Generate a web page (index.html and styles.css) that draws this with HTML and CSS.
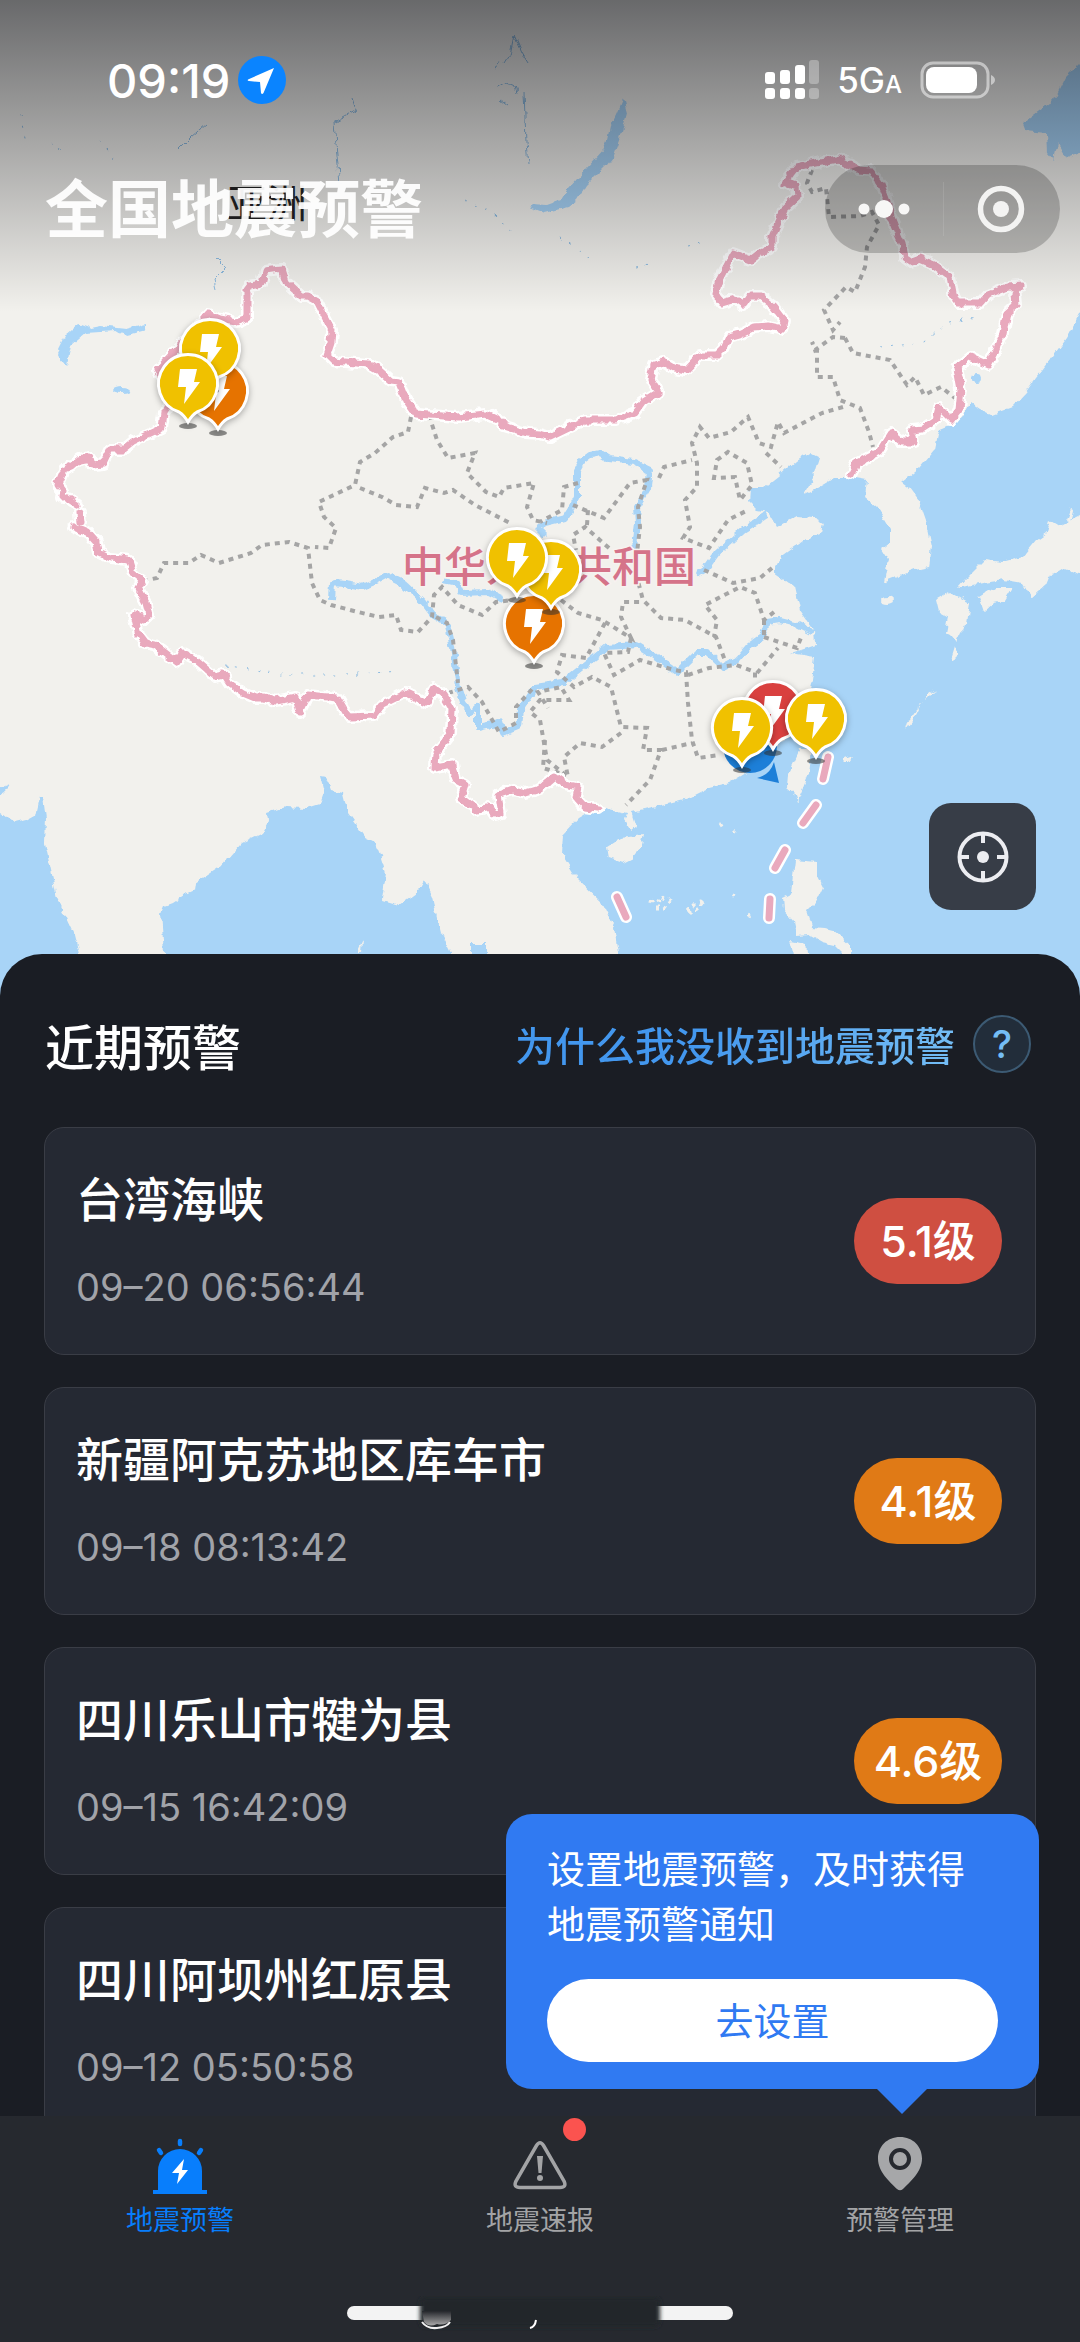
FILE: index.html
```
<!DOCTYPE html>
<html lang="zh-CN">
<head>
<meta charset="UTF-8">
<meta name="viewport" content="width=device-width, initial-scale=1.0">
<title>全国地震预警</title>
<link rel="stylesheet" href="styles.css">
</head>
<body>
<div class="app">
  <main class="content">
    <section class="map">
      <svg class="map-canvas" viewBox="0 0 1080 996" preserveAspectRatio="xMidYMin slice" aria-hidden="true">
        <defs>
          <g id="pin">
            <ellipse cx="0" cy="42" rx="9" ry="3" fill="#333" fill-opacity=".55"/>
            <path class="pin-body" d="M-9 28A29.500 29.500 0 1 1 9 28Q4 31 0 38Q-4 31 -9 28Z"/>
            <path d="M-8-15H9L6-2H12L-4 20L-2 3H-10Z" fill="#fff"/>
          </g>
          <!-- roughens coastlines and borders -->
          <filter id="rough" filterUnits="userSpaceOnUse" x="-20" y="-20" width="1120" height="1040" color-interpolation-filters="sRGB">
            <feTurbulence type="fractalNoise" baseFrequency="0.12" numOctaves="2" seed="4"/>
            <feDisplacementMap in="SourceGraphic" scale="7" xChannelSelector="R" yChannelSelector="G"/>
          </filter>
        </defs>

        <!-- seas and lakes -->
        <g class="water">
          <path d="M1100 300L1080 313 1067 337 1050 360 1036 377 1025 393 1012 407 991 415 979 409 970 403 962 417 950 425 938 430 934 450 919 468 902 482 910 488 919 500 926 520 932 547 929 567 915 570 902 575 884 582 888 560 881 549 890 542 890 528 877 507 865 497 867 480 850 477 836 477 819 487 803 495 812 480 819 457 809 452 797 460 778 477 764 488 750 488 749 503 757 511 769 513 777 527 784 523 795 517 815 518 824 523 822 532 803 541 781 557 774 572 795 587 800 610 814 630 815 645 791 653 815 657 812 680 809 693 800 715 782 742 760 765 729 783 708 788 688 798 661 805 631 812 636 827 631 831 624 820 626 813 605 808 590 811 578 818 562 835 561 853 578 880 602 903 614 927 618 953V1010H1100Z"/>
          <path d="M-20 806L0 812 15 823 27 820 36 815 40 797 43 797 46 820 45 843 57 897 74 933 79 953V1010H-20ZM-20 788H0L10 784 5 792 0 795H-20Z"/>
          <path d="M164 996V953L161 913 164 906 172 903 184 895 195 890 196 883 220 867 241 843 262 833 268 822 267 813 286 807 304 808 320 803 324 792 320 776 326 777 331 790 343 793 348 813 365 837 375 842 381 857 386 873 382 900 399 905 417 892 424 880 432 897 441 933 451 953V996Z"/>
          <path d="M472 943H486V996H472Z"/>
          <path d="M57 352L67 365 71 346 86 333 114 331 127 335 146 330 146 324 127 329 100 326 90 328 79 324 65 336Z"/>
          <path d="M623 98L627 113 622 132 613 157 607 165 585 187 577 200 568 207 544 213 529 207 533 204 547 205 561 200 567 190 579 177 603 150 607 140 610 127 617 112Z"/>
          <path d="M1100 50L1080 63 1065 78 1054 100 1023 123 1026 131 1046 133 1047 152 1054 160 1058 142 1067 158 1080 153H1100Z"/>
          <ellipse cx="122" cy="390" rx="9" ry="3"/>
          <ellipse cx="977" cy="378" rx="5" ry="4"/>
        </g>

        <!-- islands -->
        <g class="land">
          <path d="M621 838L643 835 640 848 633 858 623 863 609 858 607 847Z"/>
          <path d="M800 748L812 748 809 773 803 788 797 802 794 793 787 787 788 773Z"/>
          <path d="M795 860L817 862 817 875 823 887 817 900 807 910 812 927 825 928 833 930 850 945 850 960 835 945 822 942 808 934 797 935 794 922 784 910 783 897 791 893Z"/>
          <path d="M790 941L806 944 808 960H795Z"/>
          <path d="M936 600L950 592 970 603 967 623 961 632 956 642 951 636 945 633 948 617 939 612Z"/>
          <path d="M979 597L995 587 1013 587 1005 600 995 602 984 612Z"/>
          <path d="M957 588L967 577 984 560 1003 562 1022 557 1036 540 1046 533 1050 520 1060 526 1080 516H1100V575H1080L1062 568 1050 575 1046 585 1031 598 1022 583 1005 580 984 583Z"/>
          <ellipse cx="887" cy="600" rx="7" ry="3"/>
          <path d="M905 730l6-8 6-12 5-6-7 6-7 10zM926 700l10-10-8 5zM950 660l8-5-4-8zM842 762l7 0 4-6-8 3zM852 735l6-2zM867 753l3 3zM1068 520l4-11 2 1-3 12zM357 953l6-13-1 13z"/>
          <path d="M650 902l5-3 6 4 4-8M655 908l9 0 7-10M687 912l8-9 9-3-5 8-9 5zM720 823l3 5M733 830l3 3M748 915l2 1M732 895l3 1" fill="none" stroke="#f2f1ed" stroke-width="3" stroke-dasharray="4 4"/>
        </g>

        <!-- rivers -->
        <g class="river">
          <path d="M545 535L538 528 545 523 565 518 572 507 577 497 577 470 582 461 590 455 600 453 610 459 633 462 650 470 648 488 637 507 638 523 635 547"/>
          <path d="M697 573L707 567 717 553 743 530 767 515"/>
          <path d="M443 580L457 583 462 593 487 592 503 600"/>
          <path d="M332 600L333 583 345 584 363 587 372 583 387 575 403 583 423 602 433 615 447 623 453 647 458 687 463 702 470 713 478 705 478 728 500 723 503 733 518 727 520 710 535 687 562 683 576 672 600 653 607 647 637 645 653 655 677 672 697 652 707 652 723 667 737 660 749 646 762 637 767 622 780 620 796 624 812 632"/>
        </g>
        <path class="stream" d="M514 35l-4 20-5 8M514 35l8 18 6 10M493 68l8-6M524 92l2 50 2 22M352 98l4 12-22 12 3 34 3 28M206 125l-14 12-12 12M216 258l10 10-12 12 2 8"/>
        <path class="stream" d="M497 88l8-5 10 4 2 6M500 100l8 6"/>
        <path class="stream faint" d="M465 200l30 15 20 22M560 238l35 24M635 268l18-4M688 246l18 -4M20 115l6 28M50 142l16 14M100 140l14 18M880 348l44-6 22-18 34-8M225 665l60 10 60 0 55-4"/>

        <!-- province lines -->
        <g class="province">
          <path d="M411 417L408 432 393 437 375 453 360 462 355 485 319 502 324 517 336 528 329 548 315 547"/>
          <path d="M143 581L157 578 164 563 189 563 201 555 219 563 251 553 262 545 289 542 308 548 312 583 320 600 331 605 358 612 379 617 396 615 401 630 418 632 432 617 434 595 442 587 458 605 482 615 496 602 513 600"/>
          <path d="M429 415L437 440 448 458 475 453 467 473 486 492 499 497 504 488 534 483 527 507 533 520 547 523"/>
          <path d="M360 488L382 497 396 505 417 507 425 488 444 493 453 490 475 505 510 523"/>
          <path d="M812 170L807 183 812 192 826 188 829 217 860 216 872 212 879 225 867 247 865 267 855 292 846 287 824 310 833 330 840 322"/>
          <path d="M845 338L833 337 815 350 812 342 817 350 817 377 833 377 840 400 860 408 869 432 873 447"/>
          <path d="M845 338L853 353 890 360 907 385 915 377 924 395 941 387 955 398"/>
          <path d="M843 407L822 413 784 433 778 422 771 447 759 443 748 417 731 432 709 438 700 427 692 443 697 463 697 487 685 500 690 527 683 538 709 548 728 520 748 510"/>
          <path d="M659 478L664 467 692 460M766 453L781 467"/>
          <path d="M717 460L728 452 747 463 752 485 740 500 735 477 714 478Z"/>
          <path d="M578 483L564 487 562 510 540 522"/>
          <path d="M573 505L604 518 630 483 647 480 638 507 640 527 635 570 643 600 661 618 685 620 716 637 726 663"/>
          <path d="M609 548L585 527 573 535 576 550M587 525L588 510"/>
          <path d="M561 600L578 613 602 620 631 638 621 617 623 602 640 602"/>
          <path d="M605 623L586 658 562 655 557 672 574 687 592 677 611 687 621 727 647 728 643 750 661 750 650 780 626 805"/>
          <path d="M631 638L628 652 604 653 614 675 640 660 674 670 686 672 688 703 692 740 698 758 719 755"/>
          <path d="M662 750L692 743M688 675L709 668 736 665 755 672 755 682M757 673L778 648M764 637L797 648 802 635"/>
          <path d="M774 612L764 620 755 593 740 587 705 605 717 620 714 637M764 620V637"/>
          <path d="M704 570L733 583 760 578 772 568"/>
          <path d="M621 733L602 747 580 743 564 757 568 777 547 760 540 720 530 712 540 700 569 700 561 687 538 692 548 708"/>
          <path d="M448 693L468 687 482 702 499 732 516 723 516 707 534 687"/>
          <path d="M436 617L447 623 453 640 458 683M545 740L543 768 566 775"/>
        </g>

        <!-- national border -->
        <g class="border">
          <path id="border" d="M62 497L63 491 58 484 64 470 71 467 79 460 90 458 92 465 103 464 110 449 124 449 134 441 162 428 164 413 175 395 158 370 165 362 195 330 208 314 220 319 236 322 247 318 247 290 250 286 262 284 265 271 272 270 282 269 286 282 301 296 308 296 317 301 325 317 332 330 331 343 327 355 333 361 368 364 380 371 391 381 399 382 406 400 416 414 458 417 486 414 499 420 504 426 527 433 540 434 550 437 585 420 616 420 635 413 643 402 659 392 651 380 654 365 664 362 674 368 686 370 700 355 717 355 724 348 729 337 740 334 754 327 769 326 783 329 784 320 774 307 760 296 750 296 744 305 736 299 722 303 715 294 719 280 733 253 751 260 760 253 772 247 772 237 785 208 797 197 796 186 785 182 797 167 815 163 838 159 850 165 859 170 871 171 881 185 886 198 891 217 897 232 902 243 905 257 912 262 920 259 934 265 950 277 953 293 957 303 981 303 988 295 1008 287 1021 286 1015 293 1016 305 1007 313 1003 333 995 352 988 365 970 357 957 367 961 390 959 410 951 420 939 408 936 420 922 429 912 430 914 442 902 442 891 433 879 452 857 463 851 475M68 499L77 505M80 513L81 522M74 527L88 533 96 542 98 552 110 558 129 560 133 573 143 581 138 588 146 603 149 615 144 620 134 615 139 635 145 643 155 645 177 662 183 653 193 658 215 677 224 675 229 683 243 693 255 698 265 698 275 701 296 697 300 712 308 695 337 698 344 710 350 717 374 716 382 705 406 693 427 703 434 688 444 695 452 708 451 733 436 753 435 768 453 765 456 780 465 785 461 798 477 810 489 807 494 815 501 813 498 795 513 790 526 793 540 789 554 777 564 784 578 787 576 797 585 807 599 809"/>
        </g>
        <use class="border-line" href="#border"/>
        <g class="border sea-dashes">
          <path id="sea-dashes" d="M828 757L823 779M816 805L803 823M785 850L775 868M770 899L769 918M617 897L626 917"/>
        </g>
        <use class="border-line sea-dashes" href="#sea-dashes"/>

        <text class="map-label country" x="402" y="582">中华人民共和国</text>
        <text class="map-label" x="227" y="218">亚洲</text>

        <!-- current position -->
        <g class="position">
          <circle cx="750" cy="746" r="27"/>
          <path d="M757 778Q770 775 774 762L779 783Z"/>
        </g>

        <!-- quake pins -->
        <use class="level-mid" href="#pin" x="218" y="391"/>
        <use class="level-low" href="#pin" x="210" y="349"/>
        <use class="level-low" href="#pin" x="188" y="384"/>
        <use class="level-mid" href="#pin" x="534" y="624"/>
        <use class="level-low" href="#pin" x="551" y="570"/>
        <use class="level-low" href="#pin" x="517" y="558"/>
        <use class="level-high" href="#pin" x="773" y="711"/>
        <use class="level-low" href="#pin" x="742" y="728"/>
        <use class="level-low" href="#pin" x="816" y="719"/>
      </svg>

      <header class="topbar">
        <div class="status">
          <div class="status-left">
            <span class="time">09:19</span>
            <svg width="48" height="48" viewBox="0 0 48 48"><circle cx="24" cy="24" r="24" fill="#0a84ff"/><path d="M36 12L10 23.500Q9 25 11 25L22 26 23 37Q24 39 25.500 37Z" fill="#fff"/></svg>
          </div>
          <div class="status-right">
            <svg width="54" height="40" viewBox="0 0 54 40" fill="#fff">
              <rect x="0" y="12" width="10" height="12" rx="3"/><rect x="15" y="10" width="10" height="14" rx="3"/><rect x="30" y="5" width="10" height="19" rx="3"/><rect x="44" y="0" width="10" height="24" rx="3" opacity=".3"/>
              <rect x="0" y="28" width="10" height="11" rx="3"/><rect x="15" y="28" width="10" height="11" rx="3"/><rect x="30" y="28" width="10" height="11" rx="3"/><rect x="44" y="28" width="10" height="11" rx="3" opacity=".3"/>
            </svg>
            <span class="network">5G<small>A</small></span>
            <svg width="76" height="38" viewBox="0 0 76 38"><rect x="2" y="2" width="66" height="34" rx="11" fill="none" stroke="#fff" stroke-opacity=".5" stroke-width="3"/><rect x="6" y="6" width="51" height="26" rx="8" fill="#fff"/><path d="M71 14Q75 16 75 19T71 24Z" fill="#fff" opacity=".5"/></svg>
          </div>
        </div>
        <div class="nav">
          <h1>全国地震预警</h1>
          <div class="capsule">
            <button type="button" aria-label="更多"><svg width="52" height="20" viewBox="0 0 52 20" fill="#f7f7f6"><circle cx="6" cy="10" r="5.500"/><circle cx="26" cy="10" r="9"/><circle cx="46" cy="10" r="5.500"/></svg></button>
            <button type="button" aria-label="关闭"><svg width="48" height="48" viewBox="0 0 48 48"><circle cx="24" cy="24" r="20.500" fill="none" stroke="#f3f3f2" stroke-width="5.500"/><circle cx="24" cy="24" r="8" fill="#f3f3f2"/></svg></button>
          </div>
        </div>
      </header>

      <button class="locate" type="button" aria-label="定位">
        <svg width="52" height="52" viewBox="0 0 52 52" fill="none" stroke="#ecedf1" stroke-width="4"><circle cx="26" cy="26" r="23.500"/><path d="M26 3V12M26 40V49M3 26H12M40 26H49"/><circle cx="26" cy="26" r="6" fill="#ecedf1" stroke="none"/></svg>
      </button>
    </section>

    <section class="sheet">
      <div class="sheet-head">
        <h2>近期预警</h2>
        <a href="#help" class="help"><span class="help-text">为什么我没收到地震预警</span><span class="help-icon">?</span></a>
      </div>
      <ul class="quakes">
        <li class="quake">
          <div><h3>台湾海峡</h3><time>09–20 06:56:44</time></div>
          <span class="badge red">5.1级</span>
        </li>
        <li class="quake">
          <div><h3>新疆阿克苏地区库车市</h3><time>09–18 08:13:42</time></div>
          <span class="badge">4.1级</span>
        </li>
        <li class="quake">
          <div><h3>四川乐山市犍为县</h3><time>09–15 16:42:09</time></div>
          <span class="badge">4.6级</span>
        </li>
        <li class="quake">
          <div><h3>四川阿坝州红原县</h3><time>09–12 05:50:58</time></div>
        </li>
      </ul>
    </section>
  </main>

  <footer class="bottom">
    <div class="tip">
      <p>设置地震预警，及时获得地震预警通知</p>
      <button type="button">去设置</button>
    </div>
    <nav class="tabs">
      <a href="#warning" class="tab active">
        <svg width="56" height="60" viewBox="0 0 56 60" fill="#087efc">
          <path d="M6 54V35A22 22 0 0 1 50 35V54H55V58H1V54Z"/>
          <g stroke="#087efc" stroke-width="4.500" stroke-linecap="round"><path d="M28 5V8M7 14L9 17M49 14L47 17"/></g>
          <path d="M32 23L20 37H27L25 48 36 34H30Z" fill="#fff"/>
        </svg>
        <span>地震预警</span>
      </a>
      <a href="#report" class="tab">
        <span class="dot"></span>
        <svg width="56" height="60" viewBox="0 0 56 60" fill="none" stroke="#a3a4a6">
          <path d="M24.500 9.500Q28 4 31.500 9.500L52 45Q55 51.500 48 51.500H8Q1 51.500 4 45Z" stroke-width="3.500"/>
          <path d="M25 20H31L29.500 37H26.500Z" fill="#a3a4a6" stroke="none"/><circle cx="28" cy="42" r="3" fill="#a3a4a6" stroke="none"/>
        </svg>
        <span>地震速报</span>
      </a>
      <a href="#manage" class="tab">
        <svg width="56" height="60" viewBox="0 0 56 60">
          <path d="M28 1C15 1 6 10.500 6 22.500C6 36 18 46 25 53Q28 55.500 31 53C38 46 50 36 50 22.500C50 10.500 41 1 28 1Z" fill="#a6a7a9"/>
          <circle cx="28" cy="23" r="9" fill="#a6a7a9" stroke="#26292f" stroke-width="4"/>
        </svg>
        <span>预警管理</span>
      </a>
    </nav>
    <div class="home">
      <svg width="386" height="36" viewBox="0 0 386 36">
        <defs>
          <filter id="soft" x="-10%" y="-50%" width="120%" height="200%"><feGaussianBlur stdDeviation="2"/></filter>
          <linearGradient id="fade" x2="0" y2="1"><stop offset="0" stop-color="#24262b"/><stop offset="1" stop-color="#aaa"/></linearGradient>
        </defs>
        <rect x="0" y="10" width="386" height="14" rx="7" fill="#f3f3f3"/>
        <rect x="73" y="1" width="240" height="30" rx="6" fill="#24262b" filter="url(#soft)"/>
        <path d="M75 15H104V24Q98 30 90 28Q82 32 77 26Z" fill="url(#fade)"/>
        <path d="M75 26Q80 33 90 32Q100 31 103 26" fill="none" stroke="#f0f0f0" stroke-width="2"/>
        <path d="M189 24Q188 31 183 32" fill="none" stroke="#fff" stroke-width="2"/>
      </svg>
    </div>
  </footer>
</div>
</body>
</html>
```
FILE: styles.css
```
* {
  box-sizing: border-box;
}
body {
  margin: 0;
  font-family: Inter, "Noto Sans CJK SC", sans-serif;
  background-color: #1a1d24;
  color: #fff;
}
h1, h2, h3, p, ul {
  margin: 0;
  padding: 0;
}
a {
  text-decoration: none;
}
button {
  border: none;
  padding: 0;
  font-family: inherit;
  cursor: pointer;
}
svg {
  display: block;
}
.app {
  display: flex;
  flex-direction: column;
  height: 100vh;
}
.content {
  flex: 1;
  min-height: 0;
  overflow-y: auto;
  scrollbar-width: none;
}

/* Map */
.map {
  position: relative;
  aspect-ratio: 1080 / 996;
  background-color: #f2f1ed;
}
.map-canvas {
  width: 100%;
  height: 100%;
}
.water {
  fill: #a8d4f7;
  filter: url(#rough);
}
.land {
  fill: #f2f1ed;
  filter: url(#rough);
}
.river {
  fill: none;
  stroke: #a8d4f7;
  stroke-width: 6;
  stroke-linejoin: round;
  filter: url(#rough);
}
.stream {
  fill: none;
  stroke: #8dbbe0;
  stroke-width: 1;
  filter: url(#rough);
}
.faint {
  stroke-dasharray: 2 9;
}
.province {
  fill: none;
  stroke: #a5a5a5;
  stroke-width: 4;
  stroke-dasharray: 5 5;
}
.border {
  fill: none;
  stroke-linecap: round;
  stroke-linejoin: round;
  stroke: #fff;
  stroke-width: 12;
  filter: url(#rough);
}
.border-line {
  fill: none;
  stroke-linecap: round;
  stroke-linejoin: round;
  stroke: #e9a9bd;
  stroke-width: 7;
  filter: url(#rough);
}
.sea-dashes {
  filter: none;
}
.map-label {
  font-family: "Noto Sans CJK SC", sans-serif;
  font-size: 40px;
  fill: #222;
}
.country {
  font-size: 42px;
  font-weight: 500;
  fill: #d57389;
  stroke: #f7f2f0;
  stroke-width: 3;
  paint-order: stroke;
}
.position {
  fill: #1d7fd8;
}
.pin-body {
  stroke: #fff;
  stroke-width: 3;
  filter: drop-shadow(0 2px 3px rgba(0, 0, 0, 0.3));
}
.level-low {
  fill: #f0c100;
}
.level-mid {
  fill: #e67300;
}
.level-high {
  fill: #d9403f;
}

/* Status bar and title */
.topbar {
  position: absolute;
  top: 0;
  left: 0;
  right: 0;
  height: 312px;
  background: linear-gradient(rgba(0, 2, 8, 0.57), rgba(0, 0, 0, 0));
}
.status {
  display: flex;
  justify-content: space-between;
  align-items: center;
  height: 160px;
  padding: 0 84px 0 107px;
}
.status-left,
.status-right {
  display: flex;
  align-items: center;
}
.status-left {
  gap: 8px;
}
.status-right {
  gap: 18px;
}
.time {
  font-size: 47px;
  font-weight: 500;
}
.network {
  font-size: 35px;
  font-weight: 500;
}
.network small {
  font-size: 24px;
}
.nav {
  display: flex;
  justify-content: space-between;
  align-items: center;
  padding: 5px 20px 0 45px;
}
h1 {
  font-size: 63px;
  line-height: 88px;
  font-weight: 700;
  color: rgba(255, 255, 255, 0.94);
}
.capsule {
  display: flex;
  width: 235px;
  height: 88px;
  border-radius: 44px;
  background-color: rgba(0, 0, 0, 0.2);
}
.capsule button {
  flex: 1;
  display: flex;
  align-items: center;
  justify-content: center;
  background: none;
}
.capsule button + button {
  background: linear-gradient(rgba(255, 255, 255, 0.1), rgba(255, 255, 255, 0.1)) left center / 1px 54px no-repeat;
}
.locate {
  position: absolute;
  right: 44px;
  bottom: 86px;
  width: 107px;
  height: 107px;
  border-radius: 22px;
  display: flex;
  align-items: center;
  justify-content: center;
  background-color: #373d47;
}

/* Warning list */
.sheet {
  position: relative;
  margin-top: -42px;
  padding: 55px 44px 0;
  border-radius: 42px 42px 0 0;
  background-color: #1a1d24;
}
.sheet-head {
  display: flex;
  justify-content: space-between;
  align-items: center;
  height: 70px;
  padding: 0 5px 0 1px;
}
h2 {
  font-size: 49px;
  font-weight: 500;
}
.help {
  display: flex;
  align-items: center;
  gap: 18px;
}
.help-text {
  font-size: 40px;
  font-weight: 500;
  color: transparent;
  background: linear-gradient(90deg, #4397ee 40%, #74bdf5);
  background-clip: text;
}
.help-icon {
  width: 58px;
  height: 58px;
  border: 2px solid #3c5a73;
  border-radius: 50%;
  background-color: #222d3a;
  color: #74bdf5;
  font-size: 38px;
  font-weight: 500;
  line-height: 54px;
  text-align: center;
}
.quakes {
  display: flex;
  flex-direction: column;
  gap: 32px;
  margin-top: 48px;
  list-style: none;
}
.quake {
  display: flex;
  justify-content: space-between;
  align-items: center;
  height: 228px;
  padding: 0 33px 0 31px;
  border: 1px solid #3a3d46;
  border-radius: 20px;
  background-color: #252933;
}
h3 {
  font-size: 47px;
  line-height: 70px;
  font-weight: 500;
}
time {
  display: block;
  margin-top: 22px;
  font-size: 38px;
  line-height: 60px;
  color: #a1a3a9;
}
.badge {
  min-width: 148px;
  border-radius: 43px;
  background-color: #e07a16;
  font-size: 43px;
  font-weight: 500;
  line-height: 86px;
  text-align: center;
}
.red {
  background-color: #cf4f41;
}

/* Bottom tabs */
.bottom {
  position: relative;
  background-color: #26292f;
}
.tabs {
  display: flex;
  padding-top: 20px;
}
.tab {
  position: relative;
  flex: 1;
  display: flex;
  flex-direction: column;
  align-items: center;
  gap: 5px;
  font-size: 27px;
  line-height: 40px;
  color: #a3a4a6;
}
.active {
  color: #087efc;
}
.dot {
  position: absolute;
  top: -18px;
  left: 50%;
  width: 23px;
  height: 23px;
  margin-left: 23px;
  border-radius: 50%;
  background-color: #fb534f;
}
.home {
  display: flex;
  justify-content: center;
  padding: 55px 0 10px;
}

/* Settings tip */
.tip {
  position: absolute;
  right: 41px;
  bottom: calc(100% + 27px);
  width: 533px;
  padding: 28px 41px 27px;
  border-radius: 26px;
  background-color: #307af2;
}
.tip::after {
  content: "";
  position: absolute;
  top: 100%;
  right: 112px;
  border: 25px solid transparent;
  border-top-color: #307af2;
  border-bottom: none;
}
.tip p {
  font-size: 38px;
  line-height: 55px;
}
.tip button {
  display: block;
  width: 100%;
  height: 83px;
  margin-top: 27px;
  padding-bottom: 4px;
  border-radius: 42px;
  background-color: #fff;
  color: #307af2;
  font-size: 38px;
}
```
